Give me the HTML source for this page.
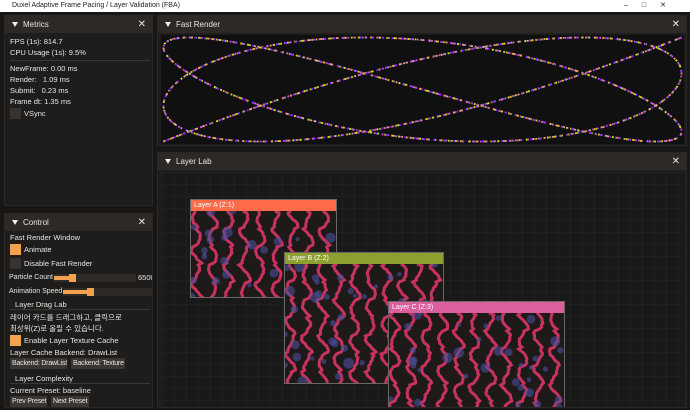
<!DOCTYPE html>
<html><head><meta charset="utf-8"><style>
*{margin:0;padding:0;box-sizing:border-box}
body{width:690px;height:410px;overflow:hidden;background:#181716;font-family:"Liberation Sans","Noto Sans CJK KR",sans-serif;font-size:7.5px;color:#e6e6e6;position:relative}
.abs{position:absolute}
.tb{left:0;top:0;width:690px;height:12px;background:#fff;color:#222;font-size:7px;line-height:12px;padding-left:12px}
.win{position:absolute;background:#1f1d1c;border:1px solid #2a2826}
.hd{position:absolute;left:0;right:0;top:0;height:17px;background:#2c2927;line-height:17px;padding-left:18px;font-size:8px}
.hd:before{content:"";position:absolute;left:7px;top:6px;border-left:3px solid transparent;border-right:3px solid transparent;border-top:5px solid #eee}
.x{position:absolute;right:6px;top:0;font-size:10px}
.t{position:absolute;white-space:nowrap}
.cb{position:absolute;width:11px;height:11px;background:#36322f}
.cb.on{background:#f2a24f}
.btn{position:absolute;background:#3a3633;height:11px;line-height:11px;padding:0 2px;white-space:nowrap;overflow:hidden;font-size:7px;letter-spacing:-0.2px}
.card{position:absolute;border:1px solid #6a6866;background:#1e1a1a;overflow:hidden}
.card .ch{height:11px;line-height:11px;padding-left:3px;font-size:7px;color:#fff}
</style></head><body>
<div class="abs tb">Duxel Adaptive Frame Pacing / Layer Validation (FBA)<span style="position:absolute;right:10px;top:0;letter-spacing:14px">–□✕</span></div>

<div class="win" style="left:4px;top:15px;width:149px;height:191px">
<div class="hd">Metrics<span class="x">✕</span></div>
<div class="t" style="left:5px;top:21px">FPS (1s): 814.7</div>
<div class="t" style="left:5px;top:32px">CPU Usage (1s): 9.5%</div>
<div class="abs" style="left:5px;top:44px;width:140px;height:1px;background:#3a3633"></div>
<div class="t" style="left:5px;top:48px">NewFrame: 0.00 ms</div>
<div class="t" style="left:5px;top:59px">Render:&nbsp;&nbsp; 1.09 ms</div>
<div class="t" style="left:5px;top:70px">Submit:&nbsp;&nbsp; 0.23 ms</div>
<div class="t" style="left:5px;top:81px">Frame dt: 1.35 ms</div>
<div class="cb" style="left:5px;top:92px"></div>
<div class="t" style="left:19px;top:93px">VSync</div>
</div>

<div class="win" style="left:4px;top:213px;width:149px;height:195px;overflow:hidden">
<div class="hd">Control<span class="x">✕</span></div>
<div class="t" style="left:5px;top:19px">Fast Render Window</div>
<div class="cb on" style="left:5px;top:30px"></div><div class="t" style="left:19px;top:31px">Animate</div>
<div class="cb" style="left:5px;top:44px"></div><div class="t" style="left:19px;top:45px">Disable Fast Render</div>
<div class="t" style="left:4px;top:60px;font-size:7px">Particle Count</div>
<div class="abs" style="left:49px;top:60px;width:82px;height:8px;background:#2e2a27"></div>
<div class="abs" style="left:49px;top:62px;width:22px;height:4px;background:#f2a24f"></div>
<div class="abs" style="left:64px;top:60px;width:7px;height:8px;background:#f2a24f"></div>
<div class="t" style="left:133px;top:59px">6500</div>
<div class="t" style="left:4px;top:74px;font-size:7px">Animation Speed</div>
<div class="abs" style="left:58px;top:74px;width:90px;height:8px;background:#2e2a27"></div>
<div class="abs" style="left:58px;top:76px;width:30px;height:4px;background:#f2a24f"></div>
<div class="abs" style="left:82px;top:74px;width:7px;height:8px;background:#f2a24f"></div>
<div class="t" style="left:10px;top:86px">Layer Drag Lab</div>
<div class="abs" style="left:5px;top:95px;width:140px;height:1px;background:#3a3633"></div>
<div class="t" style="left:5px;top:98px;font-size:7.5px">레이어 카드를 드래그하고, 클릭으로</div>
<div class="t" style="left:5px;top:109px;font-size:7.5px">최상위(Z)로 올릴 수 있습니다.</div>
<div class="cb on" style="left:5px;top:121px"></div><div class="t" style="left:19px;top:122px">Enable Layer Texture Cache</div>
<div class="t" style="left:5px;top:134px">Layer Cache Backend: DrawList</div>
<div class="btn" style="left:5px;top:144px;width:57px">Backend: DrawList</div>
<div class="btn" style="left:66px;top:144px;width:54px">Backend: Texture</div>
<div class="t" style="left:10px;top:160px">Layer Complexity</div>
<div class="abs" style="left:5px;top:169px;width:140px;height:1px;background:#3a3633"></div>
<div class="t" style="left:5px;top:172px">Current Preset: baseline</div>
<div class="btn" style="left:5px;top:182px;width:37px">Prev Preset</div>
<div class="btn" style="left:46px;top:182px;width:38px">Next Preset</div>
</div>

<div class="win" style="left:157px;top:15px;width:530px;height:131px">
<div class="hd">Fast Render<span class="x">✕</span></div>
<div class="abs" style="left:3px;top:19px;width:523px;height:109px;background:#111010"><svg id="liss" width="523" height="109"></svg></div>
</div>

<div class="win" style="left:157px;top:152px;width:530px;height:256px;overflow:hidden">
<div class="hd">Layer Lab<span class="x">✕</span></div>
<div class="abs" style="left:4px;top:19px;width:522px;height:235px;background-color:#1a1919;background-image:linear-gradient(#212020 1px,transparent 1px),linear-gradient(90deg,#212020 1px,transparent 1px);background-size:12px 12px"></div>
<div class="card" style="left:32px;top:46px;width:147px;height:99px"><div class="ch" style="background:#ff6a48">Layer A (Z:1)</div><svg class="pat" width="147" height="88"></svg></div>
<div class="card" style="left:126px;top:99px;width:160px;height:132px"><div class="ch" style="background:#8fa030">Layer B (Z:2)</div><svg class="pat" width="160" height="121"></svg></div>
<div class="card" style="left:230px;top:148px;width:177px;height:120px"><div class="ch" style="background:#db5f9c">Layer C (Z:3)</div><svg class="pat" width="177" height="109"></svg></div>
</div>

<script>
(function(){
var s=document.getElementById('liss'),ns='http://www.w3.org/2000/svg';
var pts=[];for(var i=0;i<=1600;i++){var t=Math.PI*i/1600;pts.push((261.5+259*Math.cos(5*t)).toFixed(1)+','+(54.5-52*Math.cos(7*t)).toFixed(1));}
var cols=['#e040ff','#b4ff00','#ffa060','#7a20ff','#b07a9a'];
cols.forEach(function(c,k){var p=document.createElementNS(ns,'polyline');p.setAttribute('points',pts.join(' '));p.setAttribute('fill','none');p.setAttribute('stroke',c);p.setAttribute('stroke-width','1.8');p.setAttribute('stroke-dasharray','1.8 '+(4+k*1.3).toFixed(1));p.setAttribute('stroke-dashoffset',k*2.3);s.appendChild(p);});
var seed=7;function r(){seed=(seed*9301+49297)%233280;return seed/233280;}
document.querySelectorAll('.pat').forEach(function(sv){var w=+sv.getAttribute('width'),h=+sv.getAttribute('height');var html='';
for(var x=4;x<w;x+=16){var y=0,ph=r()*6,d='M'+(x).toFixed(1)+' 0';while(y<h){y+=2;d+=' L'+(x+Math.sin(y/5+ph)*4+((y/3)%6)*0.6+(r()-0.5)*1.5).toFixed(1)+' '+y;}html+='<path d="'+d+'" fill="none" stroke="#d93566" stroke-width="3" opacity="0.9"/>';}
for(var n=0;n<w*h/450;n++){html+='<circle cx="'+(r()*w).toFixed(1)+'" cy="'+(r()*h).toFixed(1)+'" r="'+(2+r()*3.5).toFixed(1)+'" fill="#4a4f9a" opacity="0.6"/>';}
sv.innerHTML=html;});
})();
</script>
</body></html>
